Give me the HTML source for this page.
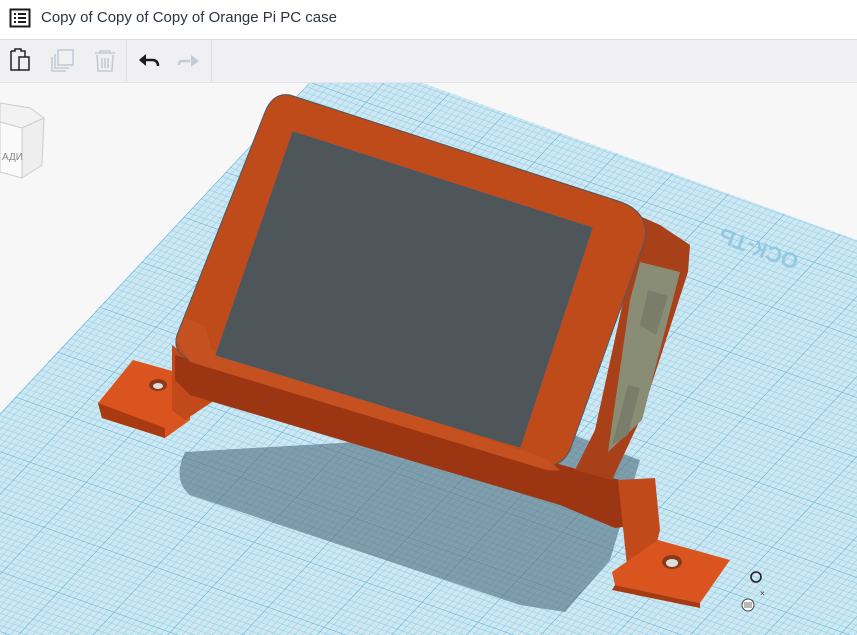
<!DOCTYPE html>
<html><head><meta charset="utf-8"><style>
html,body{margin:0;padding:0;width:857px;height:635px;overflow:hidden;background:#f7f7f8;font-family:"Liberation Sans","DejaVu Sans",sans-serif}
#hdr{position:absolute;left:0;top:0;width:857px;height:39px;background:#fff;border-bottom:1px solid #dcdde0}
#hdr .t{position:absolute;left:41px;top:9px;font-size:15px;color:#2c3540}
#tb{position:absolute;left:0;top:40px;width:857px;height:42px;background:#f0f0f3;border-bottom:1px solid #e4e4e8}
.sep{position:absolute;top:0;width:1px;height:42px;background:#dddde2}
svg{position:absolute;left:0;top:0}
</style></head><body>
<svg width="857" height="635" viewBox="0 0 857 635">
<defs>
<pattern id="g" width="100" height="100" patternUnits="userSpaceOnUse" patternTransform="matrix(0.56 0.2 -0.42 0.45 310 82)">
<rect width="100" height="100" fill="#cde8f3"/>
<g stroke="#8ecbe3" stroke-width="0.9">
<path d="M10 0V100M20 0V100M30 0V100M40 0V100M50 0V100M60 0V100M70 0V100M80 0V100M90 0V100M0 10H100M0 20H100M0 30H100M0 40H100M0 50H100M0 60H100M0 70H100M0 80H100M0 90H100"/>
</g>
<path d="M0 0V100M0 0H100" stroke="#4ea8cf" stroke-width="1.8"/>
</pattern>
</defs>
<polygon points="310,82 420,82 857,240 857,635 0,635 0,413" fill="url(#g)"/>
<!-- shadow -->
<path d="M185 452 L560 430 L640 460 L610 560 L565 612 L520 605 L190 495 Q172 480 185 452Z" fill="#4f6c7d" opacity="0.6"/>
<!-- cube -->
<polygon points="0,103 30,108 44,118 22,128 0,122" fill="#f2f2f2" stroke="#ccc"/>
<polygon points="0,122 22,128 22,178 0,172" fill="#fafafa" stroke="#ccc"/>
<polygon points="22,128 44,118 42,165 22,178" fill="#eee" stroke="#ccc"/>
<text x="2" y="160" font-size="10" fill="#888">АДИ</text>
<!-- left foot -->
<polygon points="98,403 133,360 190,376 190,420 165,438 102,418" fill="#d9541f"/>
<polygon points="98,403 102,418 165,438 165,428" fill="#a83a12"/>
<ellipse cx="158" cy="385" rx="9" ry="6" fill="#8a3a1a"/><ellipse cx="158" cy="386" rx="5" ry="3" fill="#ddd"/>
<polygon points="172,345 210,372 215,400 185,420 172,410" fill="#c24a1a"/>
<!-- body bottom thickness -->
<polygon points="175,355 580,470 640,485 640,525 615,528 560,505 190,395 175,380" fill="#9c3612"/>
<!-- right side face -->
<polygon points="615,205 660,225 690,245 688,272 640,420 612,480 575,470 595,430 630,270" fill="#a8401a"/>
<polygon points="640,262 680,272 642,420 608,452 630,300" fill="#8a8d76"/>
<polygon points="648,290 668,296 656,335 640,325" fill="#7a7d6a"/>
<polygon points="628,385 640,388 628,435 612,445" fill="#7a7d6a"/>
<!-- front frame -->
<path d="M290 95 L615 200 Q650 210 645 240 L570 450 Q560 470 540 465 L190 360 Q172 352 177 335 L265 112 Q273 92 290 95Z" fill="#bf4a1a" stroke="#4a5a66" stroke-width="1"/>
<path d="M176 340 L185 318 L205 326 L212 350 L545 458 L560 470 Q550 472 540 468 L190 362Z" fill="#c55020"/>
<!-- screen -->
<polygon points="293,132 592,228 520,447 216,355" fill="#4f5659" stroke="#3d5a70" stroke-width="1"/>
<!-- right foot -->
<polygon points="618,480 655,478 660,530 650,570 628,575" fill="#c24a1a"/>
<polygon points="612,572 658,540 730,560 700,603 615,585" fill="#d9541f"/>
<polygon points="615,585 700,603 700,608 612,590" fill="#a83a12"/>
<ellipse cx="672" cy="562" rx="10" ry="7" fill="#8a3a1a"/><ellipse cx="672" cy="563" rx="6" ry="4" fill="#ddd"/>
<circle cx="756" cy="577" r="5" fill="none" stroke="#222" stroke-width="1.6"/>
<text x="760" y="596" font-size="8" fill="#333">×</text>
<circle cx="748" cy="605" r="6" fill="#fff" stroke="#444"/>
<path d="M744 603h8M744 605h8M744 607h8" stroke="#444" stroke-width="0.8"/>
<text x="710" y="200" font-size="22" font-weight="bold" fill="#8cc4de" transform="rotate(200 760 220)" opacity="0.8">ОСК-ТЬ</text>
</svg>
<div id="hdr">
<svg width="22" height="22" style="left:9px;top:8px" viewBox="0 0 22 22"><rect x="1.5" y="1.5" width="19" height="17" fill="none" stroke="#1b1b1b" stroke-width="2"/><path d="M5 6h2M9 6h8M5 10h2M9 10h8M5 14h2M9 14h8" stroke="#1b1b1b" stroke-width="2"/></svg>
<div class="t">Copy of Copy of Copy of Orange Pi PC case</div>
</div>
<div id="tb">
<svg width="857" height="42" viewBox="0 0 857 42">
<path d="M11 11h4v-2h6v2h4v6M11 11v19h8" fill="none" stroke="#222" stroke-width="1.5"/><rect x="19" y="17" width="10" height="13" fill="none" stroke="#222" stroke-width="1.5"/>
<rect x="58" y="10" width="15" height="15" fill="none" stroke="#c3ccd6" stroke-width="1.6"/><path d="M55 14v14h14M52 17v14h14" fill="none" stroke="#c3ccd6" stroke-width="1.6"/>
<path d="M95 13h20M100 13v-2h10v2M97 15l1 16h14l1-16M102 18v10M105 18v10M108 18v10" fill="none" stroke="#c3ccd6" stroke-width="1.6"/>
<path d="M140 20h12q6 0 6 6" fill="none" stroke="#1b1b1b" stroke-width="2.5"/><polygon points="139,20 146,14 146,26" fill="#1b1b1b"/>
<path d="M190 21h-8q-3 0-3 4" fill="none" stroke="#c3ccd6" stroke-width="2.5"/><polygon points="199,21 191,15 191,27" fill="#c3ccd6"/>
</svg>
<div class="sep" style="left:126px"></div><div class="sep" style="left:211px"></div>
</div>
</body></html>
